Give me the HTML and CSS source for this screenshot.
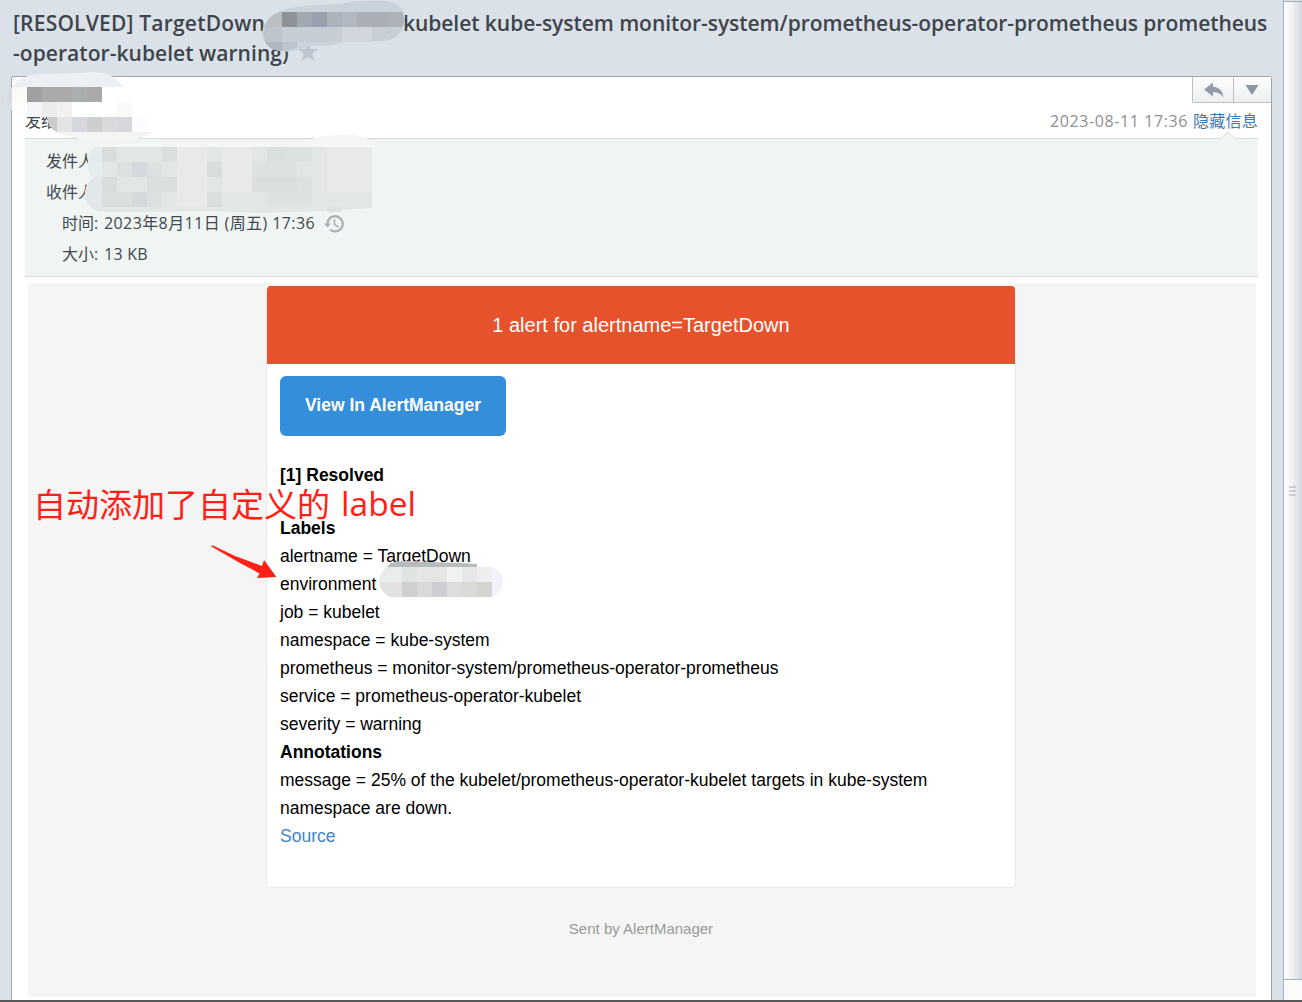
FILE: index.html
```
<!DOCTYPE html>
<html lang="zh-CN">
<head>
<meta charset="utf-8">
<title>Mail</title>
<link rel="stylesheet" href="styles.css">
</head>
<body>
<div class="window">
  <main class="mail">
    <h1 class="subject">
      <span class="line"><span class="s1">[RESOLVED] TargetDown</span><span class="s2">kubelet kube-system monitor-system/prometheus-operator-prometheus prometheus</span></span>
      <span class="line"><span class="s3">-operator-kubelet warning)</span><svg class="star" width="22" height="22" viewBox="0 0 22 22"><path d="M11 1l2.600 7h7.700l-6.100 4.500 2.400 7.700L11 15.500 4.400 20.200 6.800 12.500.700 8h7.700z" fill="#bfc5cf"/></svg></span>
    </h1>
    <section class="panel">
      <div class="tools">
        <button class="tool reply" aria-label="回复"><svg width="20" height="16" viewBox="0 0 20 16"><path d="M0 7.500L9 .5v4.200C15 5 19 9 19.500 15.500 17 11.500 13.500 10 9 10.300v4.200z" fill="#929ca8"/></svg></button>
        <button class="tool more" aria-label="更多"><svg width="14" height="10" viewBox="0 0 14 10"><path d="M.5 0h13L7 10z" fill="#8996a4"/></svg></button>
      </div>
      <div class="meta"><span class="to">发给</span><span class="when"><span class="date">2023-08-11 17:36</span><a class="toggle">隐藏信息</a></span></div>
      <div class="info">
        <svg class="notch" width="16" height="9" viewBox="0 0 16 9"><path d="M0 9L1 8 8 1l7 7 1 1z" fill="#f0f5f4"/><path d="M.5 8L8 .7 15.500 8" fill="none" stroke="#d5dad9"/></svg>
        <div class="row wide">发件人</div>
        <div class="row wide">收件人</div>
        <div class="row"><span class="cn">时间:</span><span class="val time">2023年8月11日 (周五) 17:36</span><svg class="clock" width="20" height="19" viewBox="0 0 20 19"><path d="M3.500 10A7.600 7.600 0 1 1 6.200 15.600" fill="none" stroke="#a9afb3" stroke-width="2.200"/><path d="M0 9.500h7L3.500 13.500z" fill="#a9afb3"/><path d="M10.500 5v5.500l4 2.500" fill="none" stroke="#a9afb3" stroke-width="1.500"/></svg></div>
        <div class="row"><span class="cn">大小:</span><span class="val">13 KB</span></div>
      </div>
      <div class="body">
        <article class="card">
          <header class="banner">1 alert for alertname=TargetDown</header>
          <div class="content">
            <a class="view">View In AlertManager</a>
            <p class="status"><b>[1] Resolved</b></p>
            <p><b>Labels</b></p>
            <p>alertname = TargetDown</p>
            <p>environment</p>
            <p>job = kubelet</p>
            <p>namespace = kube-system</p>
            <p>prometheus = monitor-system/prometheus-operator-prometheus</p>
            <p>service = prometheus-operator-kubelet</p>
            <p>severity = warning</p>
            <p><b>Annotations</b></p>
            <p>message = 25% of the kubelet/prometheus-operator-kubelet targets in kube-system namespace are down.</p>
            <p><a class="source">Source</a></p>
          </div>
        </article>
        <footer class="sent">Sent by AlertManager</footer>
      </div>
    </section>
  </main>
  <aside class="rail"><div class="handle"><svg width="7" height="10" viewBox="0 0 7 10"><path d="M0 1h7M0 5h7M0 9h7" stroke="#a6adb4"/></svg></div><div class="corner"></div></aside>
</div>
<div class="edge"></div>

<svg class="overlay" width="1302" height="1002" viewBox="0 0 1302 1002">
  <!-- subject -->
  <path d="M262 33C263 20 275 13 289 8C310 4 331 5 344 3C362 0 379 0 390 2C401 5 406 11 405 20C403 32 397 39 385 41L344 42 327 46 311 46C300 49 291 53 279 51C270 49 266 43 263 39Z" fill="#cad3dc"/>
  <path d="M264 27C267 19 273 14 279 12H282V27Z" fill="#b9bec3"/>
  <path d="M282 12h15v15h-15z" fill="#8e9298"/><path d="M297 12h15v15h-15z" fill="#a2a8b0"/><path d="M312 12h15v15h-15z" fill="#98a1ad"/><path d="M327 12h15v15h-15z" fill="#adb3bb"/><path d="M342 12h15v15h-15z" fill="#b1b8c1"/><path d="M357 12h30v15h-30z" fill="#a9aeb7"/><path d="M387 12h15l3 8-3 7h-15z" fill="#adb2b8"/>
  <path d="M263 27h19v15h-17z" fill="#bec4cb"/><path d="M282 27h60v15h-60z" fill="#c7cdd5"/><path d="M342 27h30v15h-30z" fill="#d1d6df"/><path d="M372 27h30c-3 9-9 13-20 14h-10z" fill="#c8ced6"/>
  <path d="M265 42h17v9c-9 0-14-4-17-9z" fill="#aeb6bf"/><path d="M282 42h15v6l-15 3z" fill="#bdc4ce"/>
  <!-- sender -->
  <path d="M12 87C16 80 25 75 40 74L82 73C100 70 115 74 123 87Z" fill="#ecf0f4"/>
  <path d="M12 87C5 92 5 104 12 111Z" fill="#d7dce1"/>
  <path d="M12 87h15v15H12z" fill="#fbfaf6"/><path d="M12 102h15v15H22c-5-1-8-3-10-6z" fill="#fdfdfc"/>
  <path d="M27 87h15v15H27z" fill="#9fa0a2"/><path d="M42 87h30v15H42z" fill="#aaa9a8"/><path d="M72 87h15v15H72z" fill="#a9aeb1"/><path d="M87 87h15v15H87z" fill="#aaa9a7"/>
  <path d="M27 102h15v15H27z" fill="#f4f5f8"/><path d="M42 102h15v15H42z" fill="#ececec"/><path d="M57 102h15v15H57z" fill="#f1f1f1"/><path d="M72 102h45v15H72z" fill="#fff"/><path d="M117 102h15v15h-15z" fill="#f9f9f9"/>
  <path d="M47 117h10v15C50 129 48 124 47 117z" fill="#c8cacc"/><path d="M57 117h15v15H57z" fill="#e4e4e4"/><path d="M72 117h15v15H72z" fill="#d5d8dc"/><path d="M87 117h15v15H87z" fill="#cdcfce"/><path d="M102 117h15v15h-15z" fill="#dad9dc"/><path d="M117 117h15v15h-15z" fill="#d8d8dc"/><path d="M132 117h15v15h-15z" fill="#fbfcff"/>
  <path d="M56 132h97c-8 7-24 9-43 9-20 0-39-2-54-9z" fill="#f3f5f5"/>
  <!-- addresses -->
  <path d="M90 147C110 142 240 143 300 143C318 135 347 133 360 136 369 138 376 143 377 147Z" fill="#f3f6f5"/>
  <path d="M102 147v30H92C86 170 86 156 94 147Z" fill="#e4ecee"/><path d="M102 176v36C92 211 84 203 85 192 86 183 91 177 102 175Z" fill="#e2e8e9"/>
  <path d="M100 207h272v1L327 211 260 213 210 211 140 212H102C98 212 94 209 91 207Z" fill="#e2e7e6"/>
  <path d="M102 147h270v60H102z" fill="#e2e6e5"/>
  <path d="M102 147h15v15h-15zM102 177h15v15h-15zM207 162h15v15h-15zM282 177h15v15h-15z" fill="#d9dddc"/>
  <path d="M162 147h15v15h-15zM147 177h30v15h-30zM267 147h15v15h-15zM252 177h45v15h-45zM102 192h30v15h-30zM207 192h15v15h-15z" fill="#dadfde"/>
  <path d="M132 162h15v15h-15zM132 192h15v15h-15z" fill="#d3d9dc"/>
  <path d="M177 147h30v60h-30zM222 147h30v45h-30zM327 147h45v45h-45z" fill="#e7eae9"/>
  <path d="M282 147h30v15h-30zM252 162h45v15h-45zM267 192h45v15h-45z" fill="#dce2e1"/>
  <path d="M117 162h15v15h-15zM147 162h15v15h-15zM147 192h15v15h-15zM297 177h15v15h-15z" fill="#dae1e0"/>
  <path d="M327 207h15v5h-15z" fill="#dde2e1"/>
  <!-- environment value -->
  <path d="M379 582C380 573 385 567 390 563L402 561 460 563 477 564V567H492C500 569 503 576 503 583 502 591 497 596 492 597H390C383 594 379 588 379 582Z" fill="#f2f3fa"/>
  <path d="M387 567L391 563 402 561 460 563 477 564V567Z" fill="#b9bcbc"/>
  <path d="M387 567h15v15h-23c1-7 4-12 8-15z" fill="#eaecec"/><path d="M402 567h15v15h-15z" fill="#dfe3e1"/><path d="M417 567h30v15h-30z" fill="#e4e6e5"/><path d="M447 567h15v15h-15z" fill="#f2f1f0"/><path d="M462 567h15v15h-15z" fill="#e6e7e9"/><path d="M477 567h15v15h-15z" fill="#ecefed"/>
  <path d="M379 582h23v15H390c-7-4-10-9-11-15z" fill="#e3e2e1"/><path d="M402 582h15v15h-15z" fill="#cecfd1"/><path d="M417 582h15v15h-15z" fill="#d9d9d7"/><path d="M432 582h15v15h-15z" fill="#cdced2"/><path d="M447 582h15v15h-15z" fill="#dedddd"/><path d="M462 582h15v15h-15z" fill="#dadad9"/><path d="M477 582h15v15h-15z" fill="#d5d5cf"/>
  <!-- callout -->
  <path d="M210.500 546L213 545.500 235 556 262 566 264 560 276.500 577 257 578 259.500 573.500 240 563Z" fill="#ff2116"/>
  <text class="callout" x="33" y="516.500" textLength="297">自动添加了自定义的</text><text class="callout" x="341" y="515.500" textLength="75" lengthAdjust="spacingAndGlyphs">label</text>
</svg>
</body>
</html>
```
FILE: styles.css
```
* { box-sizing: border-box; }
body { margin: 0; width: 1302px; height: 1002px; overflow: hidden; background: #dae1e8; position: relative; display: flex; flex-direction: column; font-family: "Open Sans", "Noto Sans CJK SC", sans-serif; }
p, h1 { margin: 0; }
.window { display: flex; height: 1000px; flex: none; overflow: hidden; }
.edge { height: 2px; flex: none; background: #56585a; }
.mail { width: 1283px; padding: 8px 11px 0; }
.subject { height: 68px; font-size: 21px; line-height: 30px; color: #3f454b; font-weight: 700; white-space: nowrap; }
.line { display: flex; height: 30px; padding-left: 2px; }
.s1, .s2, .s3 { font-weight: 600; }
.s1 { width: 390px; letter-spacing: 0.2px; }
.s2 { letter-spacing: -0.05px; }
.s3 { letter-spacing: 0.05px; }
.star { margin: 3px 0 0 8px; }
.panel { position: relative; width: 1261px; height: 924px; border: 1px solid #9ba4ac; border-bottom: 0; border-radius: 3px 3px 0 0; background: #fff; }
.tools { display: flex; justify-content: flex-end; height: 26px; }
.tool { display: flex; align-items: center; justify-content: center; padding: 0; border: 0 solid #b9c1c7; border-width: 0 0 1px 1px; background: linear-gradient(#fdfdfd, #eceef0); }
.reply { width: 41px; padding-left: 1px; border-bottom-left-radius: 2px; }
.more { width: 38px; padding-right: 1px; }
.meta { display: flex; justify-content: space-between; height: 35px; padding: 6px 13px 0; font-size: 16px; line-height: 24px; color: #42484d; }
.when { display: flex; gap: 5px; color: #8f8f8f; }
.date { letter-spacing: 0.6px; }
.toggle { color: #3c7ab5; letter-spacing: 0.25px; }
.info { position: relative; margin: 0 13px; height: 139px; padding-top: 7px; border: solid #d5dad9; border-width: 1px 0; background: #f0f5f4; font-size: 16px; line-height: 31px; color: #42484d; }
.notch { position: absolute; right: 22px; top: -8px; }
.row { display: flex; align-items: center; height: 31px; padding-left: 37px; white-space: nowrap; }
.wide { padding-left: 21px; }
.cn { width: 42px; }
.val { letter-spacing: 0.25px; }
.time { width: 220px; letter-spacing: 0.4px; }
.body { margin: 6px 15px 0 16px; height: 714px; padding-top: 3px; background: #f5f5f5; font-family: "Liberation Sans", Arial, sans-serif; }
.card { width: 750px; height: 602px; margin: 0 0 0 238px; border: 1px solid #e9e9e9; border-radius: 4px; background: #fff; }
.banner { margin: -1px -1px 0; height: 78px; line-height: 78px; border: solid #e9e9e9; border-width: 0 1px; border-radius: 4px 4px 0 0; background: #e6522c; background-clip: padding-box; color: #fff; font-size: 20px; text-align: center; }
.content { padding: 12px 13px; font-size: 17.5px; line-height: 28px; color: #000; }
.view { display: block; width: 226px; height: 60px; line-height: 58px; margin-bottom: 25px; border-radius: 6px; background: #348eda; color: #fff; font-weight: 700; text-align: center; }
.status { margin-bottom: 25px; }
.source { color: #3f84d2; }
.sent { padding: 29px 2px 0 0; line-height: 24px; font-size: 15px; color: #999; text-align: center; }
.rail { width: 19px; border-left: 1px solid #a3b1b9; display: flex; flex-direction: column; }
.handle { flex: 1; display: flex; align-items: center; justify-content: center; padding-right: 2px; border: solid #a3b1b9; border-width: 1px 0; margin-top: 1px; background: linear-gradient(90deg, #fff, #f0f1f4 45%, #d3d7de); }
.corner { height: 20px; background: #fafcfb; }
.overlay { position: absolute; left: 0; top: 0; }
.callout { font-family: "Open Sans", "Noto Sans CJK SC", sans-serif; font-size: 33px; fill: #ff2116; }
```
